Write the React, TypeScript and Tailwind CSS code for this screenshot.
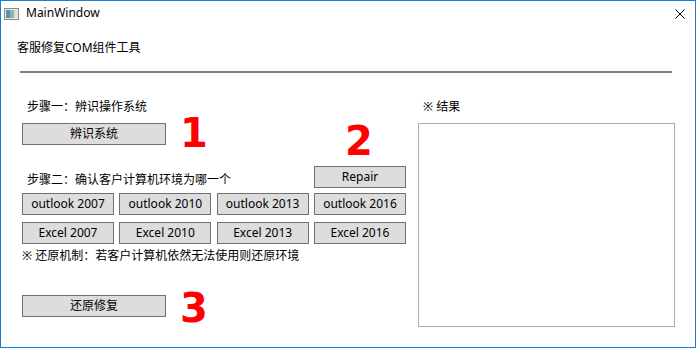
import React from "react";

const Btn = ({ children, className = "" }: { children: React.ReactNode; className?: string }) => (
  <div
    className={`h-[22px] flex items-center justify-center bg-[#dddddd] border border-[#707070] text-[12px] text-black leading-none ${className}`}
  >
    {children}
  </div>
);

export default function App() {
  const font = "font-['Noto_Sans','Noto_Sans_CJK_SC',sans-serif]";
  return (
    <div
      className={`relative w-[696px] h-[348px] border border-[#1a7fd4] bg-white flex flex-col overflow-hidden text-[12px] text-black ${font}`}
    >
      {/* Title bar */}
      <div className="h-[24px] flex items-center shrink-0">
        <svg className="ml-[3px] mt-[2px]" width="15" height="12" viewBox="0 0 15 12">
          <rect x="0.5" y="0.5" width="14" height="11" fill="#e8e8e8" stroke="#8a8a8a" />
          <rect x="2" y="2" width="4" height="8" fill="#5a8fb0" />
          <rect x="6" y="2" width="4" height="8" fill="#8fb89a" />
          <rect x="10" y="2" width="3" height="8" fill="#d8dcdc" />
        </svg>
        <span className="ml-[7px] leading-[16px]">MainWindow</span>
        <svg className="ml-auto mr-[10px] mt-[1px]" width="10" height="10" viewBox="0 0 10 10">
          <path d="M0.5 0.5 L9.5 9.5 M9.5 0.5 L0.5 9.5" stroke="#000" strokeWidth="1" fill="none" />
        </svg>
      </div>

      {/* Menu text */}
      <div className="mt-[13px] h-[20px] leading-[20px] pl-[16px]">客服修复COM组件工具</div>
      <div className="mt-[13px] ml-[19px] w-[652px] h-[2px] bg-[#808080]" />

      {/* Main */}
      <div className="flex flex-row">
        <div className="ml-[21px] w-[384px] flex flex-col">
          <div className="mt-[26px] h-[16px] leading-[16px] pl-[5px]">步骤一：辨识操作系统</div>
          <Btn className="mt-[8px] w-[144px]">辨识系统</Btn>
          <div className="mt-[21px] h-[22px] flex flex-row justify-between items-end">
            <div className="h-[16px] leading-[16px] pl-[5px]">步骤二：确认客户计算机环境为哪一个</div>
            <Btn className="w-[92px]">Repair</Btn>
          </div>
          <div className="mt-[5px] grid grid-cols-[92px_92px_92px_92px] justify-between">
            <Btn>outlook 2007</Btn>
            <Btn>outlook 2010</Btn>
            <Btn>outlook 2013</Btn>
            <Btn>outlook 2016</Btn>
          </div>
          <div className="mt-[7px] grid grid-cols-[92px_92px_92px_92px] justify-between">
            <Btn>Excel 2007</Btn>
            <Btn>Excel 2010</Btn>
            <Btn>Excel 2013</Btn>
            <Btn>Excel 2016</Btn>
          </div>
          <div className="mt-[4px] h-[16px] leading-[16px]">※ 还原机制：若客户计算机依然无法使用则还原环境</div>
          <Btn className="mt-[31px] w-[144px]">还原修复</Btn>
        </div>

        <div className="ml-[12px] flex flex-col">
          <div className="mt-[26px] h-[16px] leading-[16px] pl-[5px]">※ 结果</div>
          <div className="mt-[8px] w-[257px] h-[204px] border border-[#ababab] bg-white" />
        </div>
      </div>

      {/* Red annotation numbers */}
      <span className="absolute left-[179px] top-[112px] text-[40px] leading-none font-bold text-[#ff0000] font-['DejaVu_Sans',sans-serif]">1</span>
      <span className="absolute left-[344px] top-[120px] text-[40px] leading-none font-bold text-[#ff0000] font-['DejaVu_Sans',sans-serif]">2</span>
      <span className="absolute left-[179px] top-[287px] text-[40px] leading-none font-bold text-[#ff0000] font-['DejaVu_Sans',sans-serif]">3</span>
    </div>
  );
}
